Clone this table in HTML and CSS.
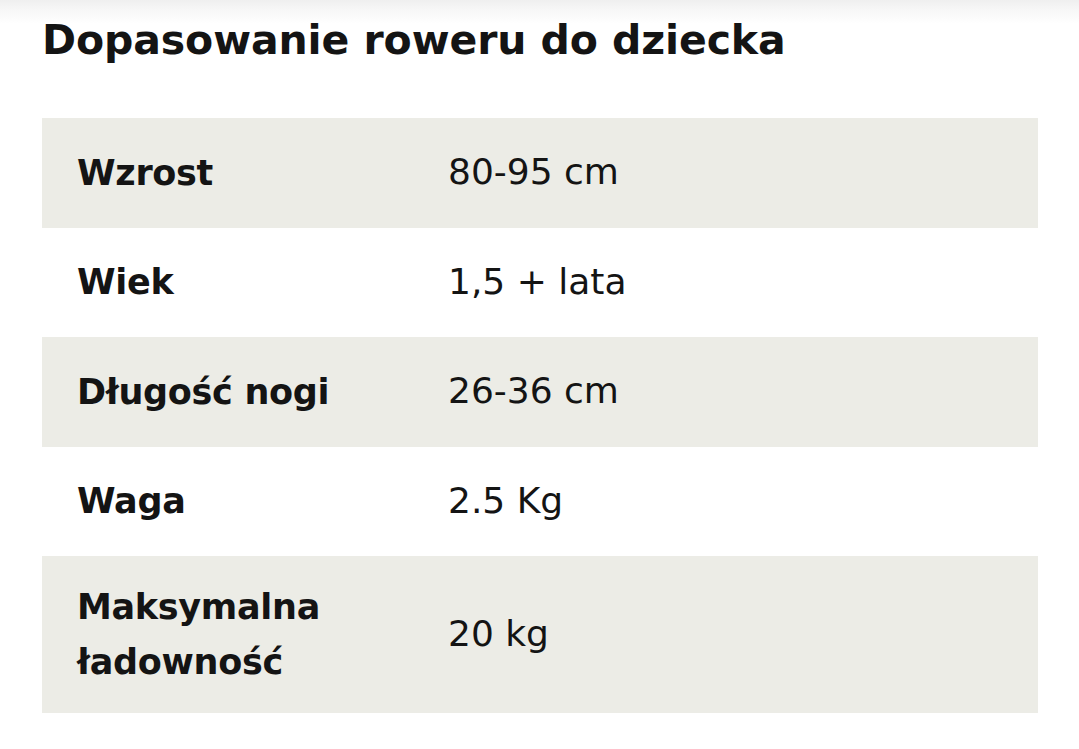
FILE: index.html
```html
<!DOCTYPE html>
<html lang="pl">
<head>
<meta charset="utf-8">
<title>Dopasowanie roweru do dziecka</title>
<link rel="stylesheet" href="styles.css">
</head>
<body>
<main class="page">
  <h1 class="title">Dopasowanie roweru do dziecka</h1>
  <div class="spec">
    <div class="row shaded">
      <div class="label">Wzrost</div>
      <div class="value">80-95 cm</div>
    </div>
    <div class="row">
      <div class="label">Wiek</div>
      <div class="value">1,5 + lata</div>
    </div>
    <div class="row shaded">
      <div class="label">Długość nogi</div>
      <div class="value">26-36 cm</div>
    </div>
    <div class="row">
      <div class="label">Waga</div>
      <div class="value">2.5 Kg</div>
    </div>
    <div class="row shaded">
      <div class="label">Maksymalna<br>ładowność</div>
      <div class="value">20 kg</div>
    </div>
  </div>
</main>
</body>
</html>
```

FILE: styles.css
```css
html, body {
  margin: 0;
  padding: 0;
  background: #ffffff;
}

body {
  font-family: "DejaVu Sans", "Liberation Sans", sans-serif;
  color: #141414;
}

.page {
  padding: 16px 41px 0 42px;
  min-height: 749px;
  box-sizing: border-box;
  background: linear-gradient(to bottom, #efefef 0, #f7f7f7 10px, #ffffff 24px) no-repeat;
}

.title {
  margin: 0 0 53px 0;
  font-size: 41px;
  line-height: 49px;
  font-weight: 700;
  letter-spacing: -0.1px;
}

.spec {
  width: 996px;
}

.row {
  display: grid;
  grid-template-columns: 371px 1fr;
  align-items: center;
  padding: 24px 0;
}

.shaded {
  background: #ecece6;
}

.label {
  padding: 0 35px;
  font-size: 35px;
  line-height: 54.5px;
  font-weight: 700;
  letter-spacing: -0.3px;
}

.value {
  padding: 0 35px 2px;
  font-size: 36px;
  line-height: 59.5px;
  font-weight: 400;
}
```
